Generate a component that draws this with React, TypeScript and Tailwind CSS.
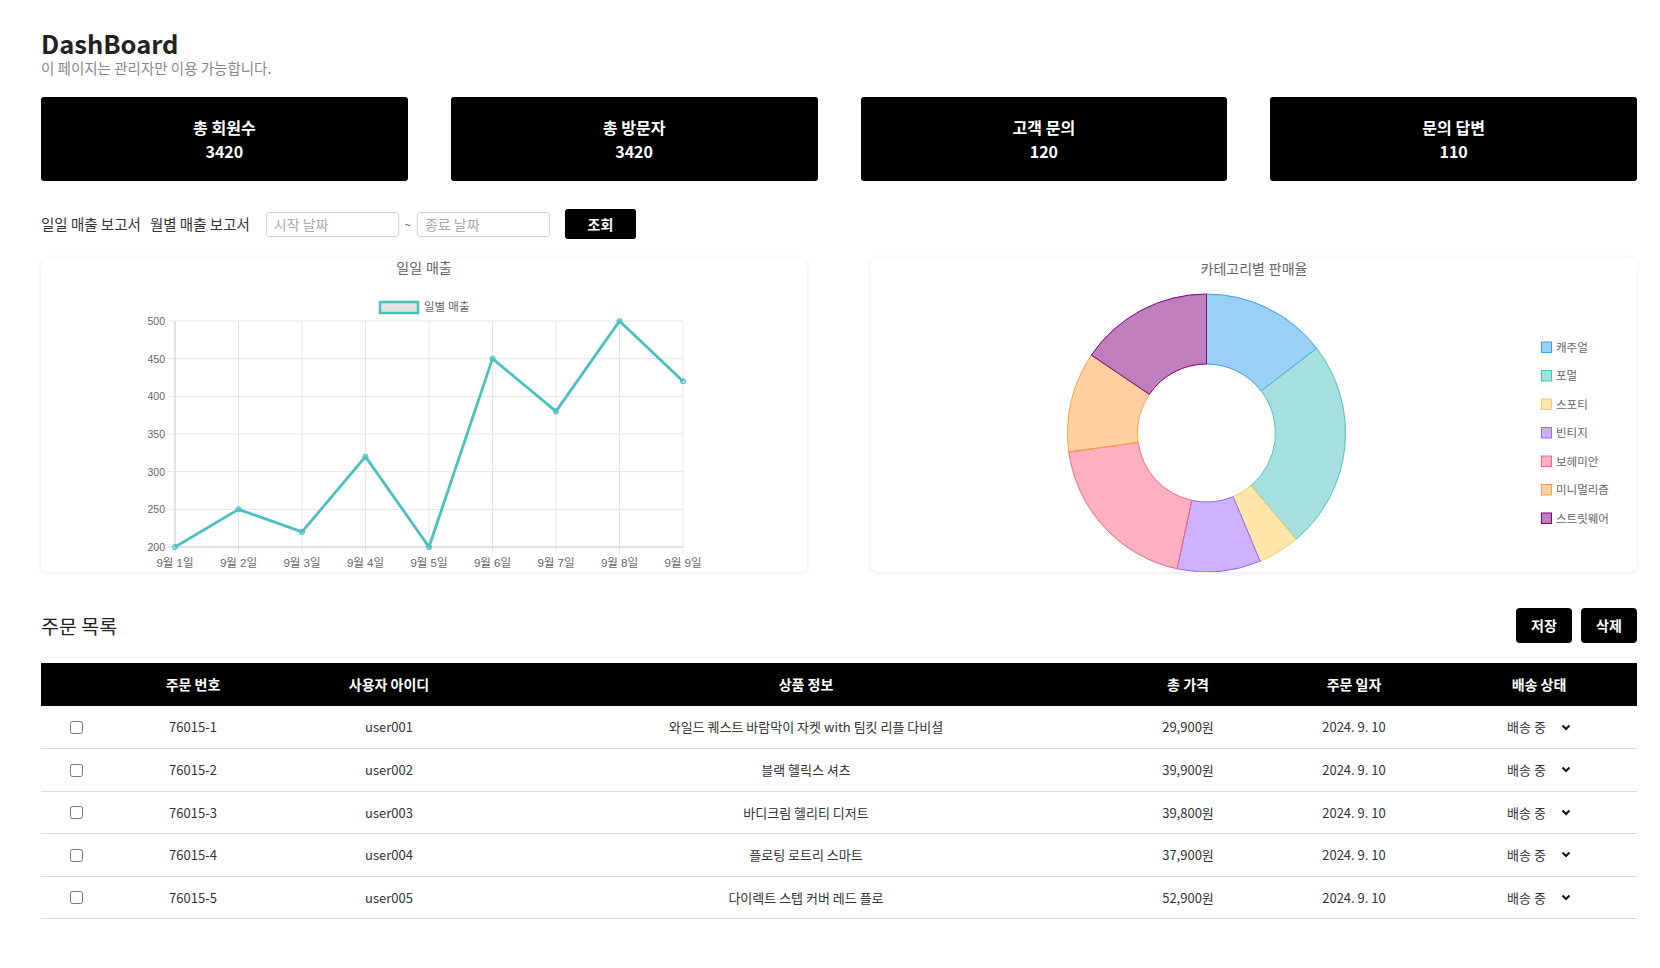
import React from 'react';

interface Stat {
  label: string;
  value: number;
}

interface Category {
  name: string;
  value: number;
  fill: string;
  stroke: string;
}

interface Order {
  id: string;
  user: string;
  product: string;
  price: string;
  date: string;
  status: string;
}

const stats: Stat[] = [
  { label: '총 회원수', value: 3420 },
  { label: '총 방문자', value: 3420 },
  { label: '고객 문의', value: 120 },
  { label: '문의 답변', value: 110 },
];

const days = ['9월 1일', '9월 2일', '9월 3일', '9월 4일', '9월 5일', '9월 6일', '9월 7일', '9월 8일', '9월 9일'];
const daily = [200, 250, 220, 320, 200, 450, 380, 500, 420];

const categories: Category[] = [
  { name: '캐주얼', value: 15, fill: 'rgba(54,162,235,0.5)', stroke: 'rgb(54,162,235)' },
  { name: '포멀', value: 25, fill: 'rgba(75,192,192,0.5)', stroke: 'rgb(75,192,192)' },
  { name: '스포티', value: 5, fill: 'rgba(255,205,86,0.5)', stroke: 'rgb(255,205,86)' },
  { name: '빈티지', value: 10, fill: 'rgba(153,102,255,0.5)', stroke: 'rgb(153,102,255)' },
  { name: '보헤미안', value: 20, fill: 'rgba(255,99,132,0.5)', stroke: 'rgb(255,99,132)' },
  { name: '미니멀리즘', value: 12, fill: 'rgba(255,159,64,0.5)', stroke: 'rgb(255,159,64)' },
  { name: '스트릿웨어', value: 16, fill: 'rgba(128,0,128,0.5)', stroke: 'rgb(128,0,128)' },
];

const orders: Order[] = [
  { id: '76015-1', user: 'user001', product: '와일드 퀘스트 바람막이 자켓 with 팀킷 리플 다비셜', price: '29,900원', date: '2024. 9. 10', status: '배송 중' },
  { id: '76015-2', user: 'user002', product: '블랙 헬릭스 셔츠', price: '39,900원', date: '2024. 9. 10', status: '배송 중' },
  { id: '76015-3', user: 'user003', product: '바디크림 헬리티 디저트', price: '39,800원', date: '2024. 9. 10', status: '배송 중' },
  { id: '76015-4', user: 'user004', product: '플로팅 로트리 스마트', price: '37,900원', date: '2024. 9. 10', status: '배송 중' },
  { id: '76015-5', user: 'user005', product: '다이렉트 스텝 커버 레드 플로', price: '52,900원', date: '2024. 9. 10', status: '배송 중' },
];

const chartFont = '"Liberation Sans", "Noto Sans CJK KR", sans-serif';

const LineChart: React.FC = () => {
  const x0 = 134;
  const step = 63.5;
  const top = 64;
  const bottom = 290;
  const yOf = (v: number) => bottom - ((v - 200) / 300) * (bottom - top);
  const points = daily.map((v, i) => `${x0 + i * step},${yOf(v)}`).join(' ');
  const ticks = [500, 450, 400, 350, 300, 250, 200];

  return (
    <svg width="766" height="315" viewBox="0 0 766 315" style={{ fontFamily: chartFont }}>
      <text x="383" y="16" textAnchor="middle" fontSize="14" fill="#666">일일 매출</text>
      <rect x="339" y="45" width="38" height="11" fill="#e3e3e3" stroke="rgb(75,192,192)" strokeWidth="2.5" />
      <text x="383" y="54" fontSize="11.5" fill="#666">일별 매출</text>
      {ticks.map(t => (
        <g key={t}>
          <line x1="126" x2={x0 + 8 * step} y1={yOf(t)} y2={yOf(t)} stroke="#e6e6e6" />
          <text x="124" y={yOf(t) + 4} textAnchor="end" fontSize="10.5" fill="#666">{t}</text>
        </g>
      ))}
      {days.map((d, i) => (
        <g key={d}>
          <line x1={x0 + i * step} x2={x0 + i * step} y1={top} y2={bottom + 6} stroke="#e6e6e6" />
          <text x={x0 + i * step} y="310" textAnchor="middle" fontSize="11.5" fill="#666">{d}</text>
        </g>
      ))}
      <line x1={x0} x2={x0} y1={top} y2={bottom} stroke="#cfcfcf" />
      <line x1={x0} x2={x0 + 8 * step} y1={bottom} y2={bottom} stroke="#cfcfcf" />
      <polyline points={points} fill="none" stroke="rgb(75,192,192)" strokeWidth="2.8" strokeLinejoin="round" />
      {daily.map((v, i) => (
        <circle key={i} cx={x0 + i * step} cy={yOf(v)} r="2.6" fill="rgba(75,192,192,0.4)" stroke="rgb(75,192,192)" strokeWidth="1" />
      ))}
    </svg>
  );
};

const arcPath = (cx: number, cy: number, R: number, r: number, a0: number, a1: number) => {
  const pt = (rad: number, a: number) => {
    const t = ((a - 90) * Math.PI) / 180;
    return `${cx + rad * Math.cos(t)},${cy + rad * Math.sin(t)}`;
  };
  const large = a1 - a0 > 180 ? 1 : 0;
  return `M${pt(R, a0)} A${R},${R} 0 ${large} 1 ${pt(R, a1)} L${pt(r, a1)} A${r},${r} 0 ${large} 0 ${pt(r, a0)} Z`;
};

const DonutChart: React.FC = () => {
  const total = categories.reduce((s, c) => s + c.value, 0);
  let acc = 0;
  const slices = categories.map(c => {
    const a0 = (acc / total) * 360;
    acc += c.value;
    const a1 = (acc / total) * 360;
    return { ...c, d: arcPath(335.5, 176, 139, 69, a0, a1) };
  });

  return (
    <svg width="766" height="315" viewBox="0 0 766 315" style={{ fontFamily: chartFont }}>
      <text x="383" y="17" textAnchor="middle" fontSize="14" fill="#666">카테고리별 판매율</text>
      {slices.map(s => (
        <path key={s.name} d={s.d} fill={s.fill} stroke={s.stroke} strokeWidth="1" />
      ))}
      {categories.map((c, i) => (
        <g key={c.name}>
          <rect x="670.5" y={85 + i * 28.5} width="10" height="10.5" fill={c.fill} stroke={c.stroke} strokeWidth="1" />
          <text x="685" y={94.5 + i * 28.5} fontSize="11.5" fill="#666">{c.name}</text>
        </g>
      ))}
    </svg>
  );
};

const Chevron: React.FC = () => (
  <svg width="10" height="7" viewBox="0 0 10 7">
    <path d="M1.5 1.5 L5 5 L8.5 1.5" fill="none" stroke="#111" strokeWidth="2" />
  </svg>
);

const App: React.FC = () => {
  return (
    <div
      className="min-h-screen bg-white pl-[41px] pr-[23px] pt-[28px] pb-10 text-[#222]"
      style={{ fontFamily: '"Noto Sans CJK KR", "Noto Sans", sans-serif' }}
    >
      <h1 className="text-[25.5px] font-bold leading-[30px]">DashBoard</h1>
      <p className="mt-[1px] text-[14.5px] leading-[18px] text-[#888]">이 페이지는 관리자만 이용 가능합니다.</p>

      <div className="mt-[20px] grid grid-cols-4 gap-[43px]">
        {stats.map(s => (
          <div key={s.label} className="flex h-[84px] flex-col items-center justify-center rounded-[3px] bg-black text-[16px] font-bold leading-[24px] text-white">
            <span>{s.label}</span>
            <span>{s.value}</span>
          </div>
        ))}
      </div>

      <div className="mt-[28px] flex h-[30px] items-center text-[14.5px] text-[#333]">
        <span>일일 매출 보고서</span>
        <span className="ml-[9px]">월별 매출 보고서</span>
        <input
          placeholder="시작 날짜"
          className="ml-[16px] h-[25px] w-[133px] rounded-[3px] border border-[#d4d4d4] px-[7px] text-[14px] placeholder:text-[#aaa] outline-none"
        />
        <span className="mx-[6px] text-[11px] text-[#555]">~</span>
        <input
          placeholder="종료 날짜"
          className="h-[25px] w-[133px] rounded-[3px] border border-[#d4d4d4] px-[7px] text-[14px] placeholder:text-[#aaa] outline-none"
        />
        <button className="ml-[15px] h-[30px] w-[71px] rounded-[3px] bg-black text-[14px] font-bold text-white">조회</button>
      </div>

      <div className="mt-[18px] grid grid-cols-2 gap-[64px]">
        <div className="h-[315px] overflow-hidden rounded-[8px] bg-white shadow-[0_1px_5px_rgba(0,0,0,0.09)]">
          <LineChart />
        </div>
        <div className="h-[315px] overflow-hidden rounded-[8px] bg-white shadow-[0_1px_5px_rgba(0,0,0,0.09)]">
          <DonutChart />
        </div>
      </div>

      <div className="mt-[36px] flex items-center justify-between">
        <h2 className="text-[19.5px] leading-[24px] text-[#222]">주문 목록</h2>
        <div className="flex gap-[9px]">
          <button className="h-[35px] w-[56px] rounded-[4px] bg-black text-[14px] font-bold text-white">저장</button>
          <button className="h-[35px] w-[56px] rounded-[4px] bg-black text-[14px] font-bold text-white">삭제</button>
        </div>
      </div>

      <table className="mt-[20px] w-full table-fixed border-collapse">
        <colgroup>
          <col className="w-[70px]" />
          <col className="w-[164px]" />
          <col className="w-[228px]" />
          <col className="w-[606px]" />
          <col className="w-[158px]" />
          <col className="w-[174px]" />
          <col className="w-[196px]" />
        </colgroup>
        <thead>
          <tr className="h-[43px] bg-black text-[14px] font-bold text-white">
            <th></th>
            <th>주문 번호</th>
            <th>사용자 아이디</th>
            <th>상품 정보</th>
            <th>총 가격</th>
            <th>주문 일자</th>
            <th>배송 상태</th>
          </tr>
        </thead>
        <tbody>
          {orders.map(o => (
            <tr key={o.id} className="h-[42.5px] border-b border-[#dcdcdc] text-center text-[13px] text-[#333]">
              <td>
                <input type="checkbox" className="relative top-[-1px] h-[13px] w-[13px] align-middle" />
              </td>
              <td>{o.id}</td>
              <td>{o.user}</td>
              <td>{o.product}</td>
              <td>{o.price}</td>
              <td>{o.date}</td>
              <td>
                <div className="flex items-center justify-center gap-[15px]">
                  <span>{o.status}</span>
                  <Chevron />
                </div>
              </td>
            </tr>
          ))}
        </tbody>
      </table>
    </div>
  );
};

export default App;
